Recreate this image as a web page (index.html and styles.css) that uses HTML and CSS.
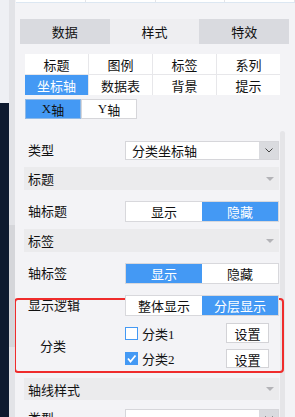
FILE: index.html
```html
<!DOCTYPE html>
<html lang="zh-CN">
<head>
  <meta charset="UTF-8">
  <title>样式设置</title>
  <link rel="stylesheet" href="styles.css">
</head>
<body>
  <div class="side">
    <div class="side-top"></div>
    <div class="side-bottom"></div>
  </div>
  <div class="rail"><div class="rail-thumb"></div></div>

  <div class="panel">
    <div class="strip">
      <span></span><span></span><span></span><span></span>
    </div>

    <div class="tabs">
      <div class="tab">数据</div>
      <div class="tab active">样式</div>
      <div class="tab">特效</div>
    </div>

    <div class="subtabs">
      <div class="subtab">标题</div>
      <div class="subtab">图例</div>
      <div class="subtab">标签</div>
      <div class="subtab">系列</div>
      <div class="subtab active">坐标轴</div>
      <div class="subtab">数据表</div>
      <div class="subtab">背景</div>
      <div class="subtab">提示</div>
    </div>

    <div class="axis">
      <div class="axis-btn active"><span class="latin">X</span>轴</div>
      <div class="axis-btn"><span class="latin">Y</span>轴</div>
    </div>

    <div class="scroll">
      <div class="content">
        <div class="row first">
          <div class="label">类型</div>
          <div class="select">
            <span class="select-text">分类坐标轴</span>
            <span class="select-arrow">
              <svg width="8" height="5" viewBox="0 0 8 5"><polyline points="0.5,0.5 4,4 7.5,0.5" fill="none" stroke="#444" stroke-width="1"/></svg>
            </span>
          </div>
        </div>

        <div class="section">
          <span>标题</span>
          <svg width="8" height="4" viewBox="0 0 8 4"><polygon points="0,0 8,0 4,4" fill="#b3b3b7"/></svg>
        </div>

        <div class="row">
          <div class="label">轴标题</div>
          <div class="toggle">
            <div class="opt">显示</div>
            <div class="opt on">隐藏</div>
          </div>
        </div>

        <div class="section">
          <span>标签</span>
          <svg width="8" height="4" viewBox="0 0 8 4"><polygon points="0,0 8,0 4,4" fill="#b3b3b7"/></svg>
        </div>

        <div class="row">
          <div class="label">轴标签</div>
          <div class="toggle">
            <div class="opt on">显示</div>
            <div class="opt">隐藏</div>
          </div>
        </div>

        <div class="highlight">
          <div class="row">
            <div class="label">显示逻辑</div>
            <div class="toggle">
              <div class="opt">整体显示</div>
              <div class="opt on">分层显示</div>
            </div>
          </div>

          <div class="category">
            <div class="label cat-label">分类</div>
            <div class="cat-list">
              <div class="cat-item">
                <span class="check"></span>
                <span class="cat-name">分类<span class="latin">1</span></span>
                <button class="btn">设置</button>
              </div>
              <div class="cat-item second">
                <span class="check checked">
                  <svg width="13" height="13" viewBox="0 0 13 13"><polyline points="3,6.5 5.5,9.5 10.5,3.5" fill="none" stroke="#fff" stroke-width="1.8"/></svg>
                </span>
                <span class="cat-name">分类<span class="latin">2</span></span>
                <button class="btn">设置</button>
              </div>
            </div>
          </div>
        </div>

        <div class="section lower">
          <span>轴线样式</span>
          <svg width="8" height="4" viewBox="0 0 8 4"><polygon points="0,0 8,0 4,4" fill="#b3b3b7"/></svg>
        </div>

        <div class="row last">
          <div class="label">类型</div>
          <div class="select">
            <span class="select-text"></span>
            <span class="select-arrow">
              <svg width="8" height="5" viewBox="0 0 8 5"><polyline points="0.5,0.5 4,4 7.5,0.5" fill="none" stroke="#444" stroke-width="1"/></svg>
            </span>
          </div>
        </div>
      </div>
      <div class="track"></div>
    </div>
  </div>
</body>
</html>
```

FILE: styles.css
```css
* {
  box-sizing: border-box;
}

body {
  margin: 0;
  width: 295px;
  height: 417px;
  overflow: hidden;
  display: flex;
  font-family: "Noto Sans CJK SC", "Noto Sans", sans-serif;
  font-size: 12px;
  color: #111;
  background: #f3f3f6;
}

.latin {
  font-family: "Liberation Serif", serif;
}

/* left edge */
.side {
  width: 9px;
  display: flex;
  flex-direction: column;
}

.side-top {
  height: 103px;
  background: #eef0f4;
}

.side-bottom {
  flex: 1;
  background: #0e1a2f;
}

.rail {
  width: 6px;
  background: #e2e3e7;
  padding-top: 225px;
}

.rail-thumb {
  height: 122px;
  background: #d5d6da;
}

/* panel */
.panel {
  flex: 1;
  display: flex;
  flex-direction: column;
  overflow: hidden;
}

.panel > * {
  flex-shrink: 0;
}

.strip {
  display: flex;
  height: 3px;
  margin-left: 1px;
  border-bottom: 1px solid #dce7f2;
}

.strip span {
  width: 70px;
  background: #fff;
  border-right: 1px solid #e4e4e8;
}

.tabs {
  display: flex;
  height: 25px;
  margin: 16px 6px 0 5px;
}

.tab {
  flex: 1;
  display: flex;
  align-items: center;
  justify-content: center;
  background: #d9dadf;
  font-size: 13px;
}

.tab.active {
  background: #eeeef1;
}

.subtabs {
  display: grid;
  grid-template-columns: repeat(4, 1fr);
  grid-auto-rows: 20px;
  gap: 1px;
  width: 255px;
  margin: 10px 0 0 10px;
  background: #e7e7ea;
}

.subtab {
  display: flex;
  align-items: center;
  justify-content: center;
  background: #fff;
  font-size: 13px;
}

.subtab.active,
.axis-btn.active {
  background: #4499f4;
  color: #fff;
}

.axis {
  display: flex;
  margin: 4px 0 0 10px;
}

.axis-btn {
  width: 56px;
  height: 20px;
  display: flex;
  align-items: center;
  justify-content: center;
  background: #fff;
  border: 1px solid #d6d6da;
  font-size: 13px;
}

.axis-btn.active {
  border-color: #8fb9e6;
  color: #111;
}

/* scrolling form */
.scroll {
  display: flex;
  margin-top: 12px;
  flex: 1 0 auto;
}

.content {
  width: 255px;
  margin-left: 9px;
  padding-top: 10px;
}

.track {
  width: 5px;
  margin-left: 1px;
  background: #e5e5e8;
  border-radius: 3px 3px 0 0;
}

.row {
  display: flex;
  align-items: center;
  height: 21px;
  margin-top: 11px;
}

.row.first {
  height: 19px;
  margin-top: 0;
}

.row.last {
  height: 19px;
  margin-top: 9px;
}

.label {
  width: 101px;
  padding-left: 4px;
  font-size: 13px;
  line-height: 1;
  margin-top: -3px;
}

.select {
  flex: 1;
  height: 100%;
  display: flex;
  background: #fff;
  border: 1px solid #d6d6da;
}

.select-text {
  flex: 1;
  padding-left: 6px;
  font-size: 13px;
  line-height: 17px;
}

.select-arrow {
  width: 19px;
  display: flex;
  align-items: center;
  justify-content: center;
  background: #dadbdf;
}

.section {
  display: flex;
  align-items: center;
  justify-content: space-between;
  height: 23px;
  margin-top: 7px;
  padding: 0 5px 0 4px;
  background: #ebebed;
  font-size: 13px;
}

.section.lower {
  height: 22px;
  margin-top: 10px;
}

.toggle {
  flex: 1;
  height: 100%;
  display: flex;
  border: 1px solid #d8d8dc;
  background: #fff;
  position: relative;
  z-index: 1;
}

.opt {
  flex: 1;
  display: flex;
  align-items: center;
  justify-content: center;
  font-size: 13px;
}

.opt.on {
  background: #4499f4;
  color: #fff;
}

/* highlighted block */
.highlight {
  position: relative;
}

.highlight::after {
  content: "";
  position: absolute;
  top: 3px;
  left: -10px;
  right: -5px;
  bottom: -5px;
  border: 2px solid #ef2c2c;
  border-radius: 4px;
}

.category {
  display: flex;
  align-items: center;
  margin-top: 7px;
}

.cat-label {
  padding-left: 16px;
  margin-top: 0;
}

.cat-list {
  flex: 1;
  padding-right: 10px;
}

.cat-item {
  display: flex;
  align-items: center;
  height: 20px;
}

.cat-item.second {
  margin-top: 6px;
  height: 19px;
}

.check {
  width: 13px;
  height: 13px;
  border: 1px solid #4499f4;
  background: #fff;
  margin-right: 4px;
  display: flex;
}

.check.checked {
  background: #4499f4;
  border: none;
}

.cat-name {
  font-size: 13px;
}

.btn {
  margin-left: auto;
  width: 43px;
  height: 100%;
  padding: 0;
  background: #fff;
  border: 1px solid #d3d3d7;
  font-family: inherit;
  font-size: 13px;
  color: #111;
}
```
